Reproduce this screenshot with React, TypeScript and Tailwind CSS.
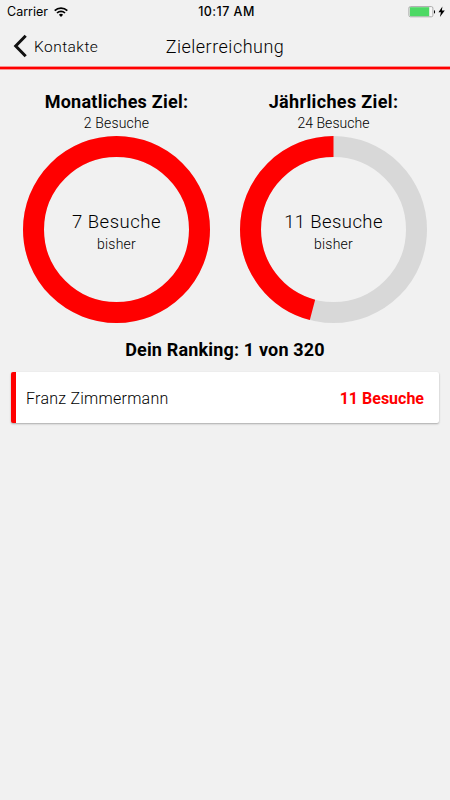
type GoalProps = {
  title: string;
  titleClass: string;
  target: string;
  targetClass: string;
  current: string;
  currentClass: string;
  fraction: number;
};

function Goal({ title, titleClass, target, targetClass, current, currentClass, fraction }: GoalProps) {
  const circumference = 2 * Math.PI * 83;
  return (
    <section className="flex w-[216px] flex-col items-center">
      <h2 className={`h-[24px] whitespace-nowrap text-[18px] font-bold leading-[24px] ${titleClass}`}>{title}</h2>
      <p className={`h-[20px] whitespace-nowrap text-[14px] font-light leading-[19px] ${targetClass}`}>{target}</p>
      <div className="mt-[2px] grid h-[187px] w-[187px] place-items-center">
        <svg className="col-start-1 row-start-1 h-[187px] w-[187px]" viewBox="0 0 187 187" fill="none">
          <circle cx="93.5" cy="93.5" r="83" stroke="#d8d8d8" strokeWidth="21" />
          <circle
            cx="93.5"
            cy="93.5"
            r="83"
            stroke="#ff0000"
            strokeWidth="21"
            strokeDasharray={fraction < 1 ? `${circumference * fraction} ${circumference}` : undefined}
            transform="translate(187 0) scale(-1 1) rotate(-90 93.5 93.5)"
          />
        </svg>
        <div className="col-start-1 row-start-1 flex flex-col items-center pt-[4px]">
          <p className={`whitespace-nowrap text-[18.5px] font-light leading-[24px] ${currentClass}`}>{current}</p>
          <p className="text-[14px] font-light leading-[20px] tracking-[0.2px]">bisher</p>
        </div>
      </div>
    </section>
  );
}

export default function App() {
  return (
    <main className="flex h-[800px] w-[450px] flex-col overflow-hidden bg-[#f1f1f1] font-['Roboto',sans-serif] text-black">
      <div className="grid h-[23px] grid-cols-3 items-center font-['Inter',sans-serif] text-[13px] leading-[23px]">
        <div className="flex items-center gap-[6px] pl-[7px]">
          <span className="text-[12.5px]">Carrier</span>
          <svg className="h-[10px] w-[14px]" viewBox="0 0 14 10" fill="none" stroke="#000" strokeWidth="1.7">
            <path d="M.7 3.7a9 9 0 0 1 12.6 0M3 6a5.8 5.8 0 0 1 8 0" />
            <path d="M4.9 7.8a3 3 0 0 1 4.2 0L7 9.9Z" fill="#000" stroke="none" />
          </svg>
        </div>
        <span className="pl-[3px] text-center text-[12.5px] font-medium tracking-[0.45px]">10:17 AM</span>
        <div className="flex items-center justify-end pr-[4px]">
          <svg className="h-[12px] w-[38px]" viewBox="0 0 38 12">
            <rect x=".9" y=".6" width="24" height="10.2" rx="1.5" fill="#f7f7f7" stroke="#aaa" />
            <rect x="1.9" y="1.2" width="19.3" height="9" fill="#4cd964" />
            <path d="M26 3.9c1.5.4 1.5 3.4 0 3.8Z" fill="#000" />
            <path d="M34.4.4 30.5 6.2h2.4l-1 4.8 4.9-6.4h-2.9Z" fill="#000" />
          </svg>
        </div>
      </div>

      <header className="grid h-[46px] grid-cols-[1fr_auto_1fr] items-center border-b-2 border-[#ff0000] pt-[2px] shadow-[0_1px_0_#f99090,inset_0_-1px_0_#f99090]">
        <button className="flex items-center gap-[7px] pl-[13px] text-[15.5px] leading-[20px]">
          <svg className="h-[24px] w-[14px]" viewBox="0 0 14 24" fill="none" stroke="#111" strokeWidth="3">
            <path d="M12.7 1.7 2.7 12l10 10.3" />
          </svg>
          <span className="pt-[2px] font-light tracking-[0.45px]">Kontakte</span>
        </button>
        <h1 className="pt-px text-[18px] font-light leading-[24px] tracking-[0.5px]">Zielerreichung</h1>
      </header>

      <div className="flex justify-center gap-[1px] pt-[21px]">
        <Goal
          title="Monatliches Ziel:"
          titleClass="tracking-[0.25px]"
          target="2 Besuche"
          targetClass="tracking-[0.15px]"
          current="7 Besuche"
          currentClass="tracking-[0.5px]"
          fraction={1}
        />
        <Goal
          title="Jährliches Ziel:"
          titleClass="tracking-[0.35px]"
          target="24 Besuche"
          targetClass="tracking-[0.05px]"
          current="11 Besuche"
          currentClass="tracking-[0.4px]"
          fraction={11 / 24}
        />
      </div>

      <h2 className="mt-[15px] text-center text-[18px] font-bold leading-[24px] tracking-[0.17px]">
        Dein Ranking: 1 von 320
      </h2>
      <div className="mx-[11px] mt-[10px] flex h-[51px] items-center justify-between rounded-[2px] border-l-[5px] border-[#ff0000] bg-white pl-[10px] pr-[15px] pt-[3px] text-[16px] shadow-[0_1px_2px_rgba(0,0,0,0.3)]">
        <span className="font-light tracking-[0.25px]">Franz Zimmermann</span>
        <span className="font-bold text-[#ff0000]">11 Besuche</span>
      </div>
    </main>
  );
}
